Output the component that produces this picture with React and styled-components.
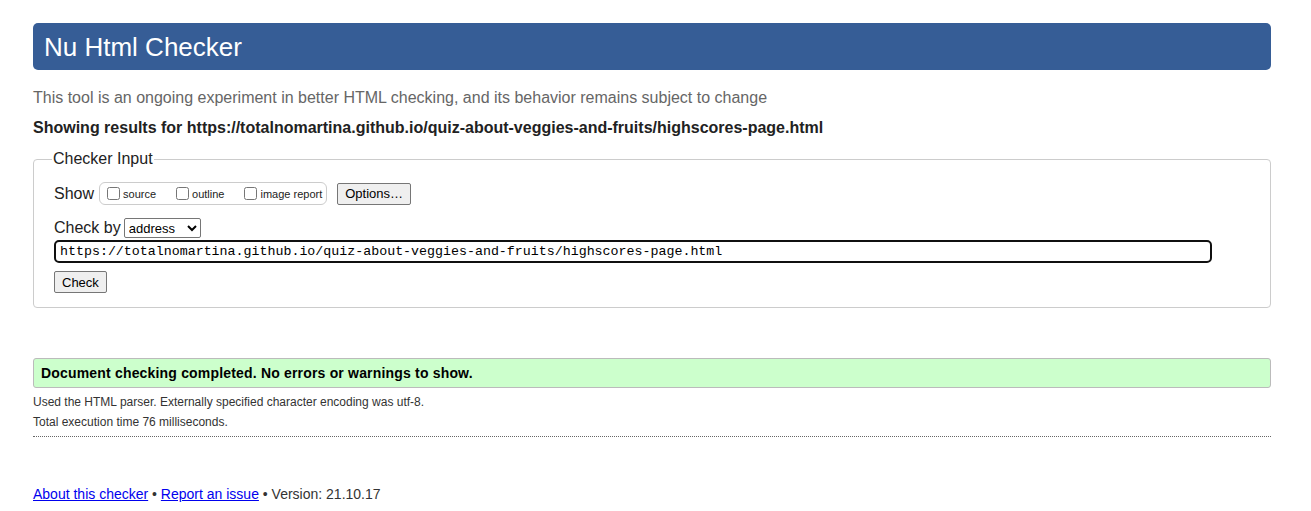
import React from "react";
import styled, { createGlobalStyle } from "styled-components";

const GlobalStyle = createGlobalStyle`
  body {
    margin: 0;
    background: #ffffff;
    font-family: "Liberation Sans", Arial, sans-serif;
    color: #222222;
  }
`;

const url = "https://totalnomartina.github.io/quiz-about-veggies-and-fruits/highscores-page.html";

function App() {
  return (
    <>
      <GlobalStyle />
      <Page>
        <Header>Nu Html Checker</Header>
        <Intro>This tool is an ongoing experiment in better HTML checking, and its behavior remains subject to change</Intro>
        <Results>Showing results for {url}</Results>
        <Fieldset>
          <Legend>Checker Input</Legend>
          <Row $after={13}>
            <Label>Show</Label>
            <ShowGroup>
              <Opt><input type="checkbox" />source</Opt>
              <Opt><input type="checkbox" />outline</Opt>
              <Opt><input type="checkbox" />image report</Opt>
            </ShowGroup>
            <Button>Options…</Button>
          </Row>
          <Row $after={2}>
            <Label>Check by</Label>
            <Select defaultValue="address">
              <option value="address">address</option>
            </Select>
          </Row>
          <UrlInput defaultValue={url} />
          <Row>
            <Button>Check</Button>
          </Row>
        </Fieldset>
        <Success>Document checking completed. No errors or warnings to show.</Success>
        <Details>
          <p>Used the HTML parser. Externally specified character encoding was utf-8.</p>
          <p>Total execution time 76 milliseconds.</p>
        </Details>
        <Footer>
          <a href="#about">About this checker</a> • <a href="#issue">Report an issue</a> • Version: 21.10.17
        </Footer>
      </Page>
    </>
  );
}

const Page = styled.div`
  padding: 23px 40px 0 33px;
  width: 1238px;
`;

const Header = styled.h1`
  margin: 0;
  height: 47px;
  box-sizing: border-box;
  padding: 9px 11px 0;
  background: #365d96;
  color: #ffffff;
  border-radius: 5px;
  font-size: 26px;
  font-weight: normal;
`;

const Intro = styled.p`
  margin: 19px 0 0;
  color: #666666;
  font-size: 16px;
`;

const Results = styled.p`
  margin: 12px 0 0;
  font-size: 16px;
  font-weight: bold;
`;

const Fieldset = styled.fieldset`
  margin: 13px 0 0;
  padding: 14px 20px 14px 20px;
  border: 1px solid #cccccc;
  border-radius: 4px;
  display: flex;
  flex-direction: column;
`;

const Legend = styled.legend`
  padding: 0 1px;
  margin-left: -2px;
  font-size: 16px;
`;

const Row = styled.div`
  display: flex;
  align-items: center;
  gap: 10px;
  margin-bottom: ${(p) => p.$after || 0}px;
`;

const Label = styled.span`
  font-size: 16px;
  margin-right: -7px;
`;

const ShowGroup = styled.span`
  display: inline-flex;
  align-items: center;
  gap: 18px;
  border: 1px solid #cccccc;
  border-radius: 6px;
  padding: 1px 4px 1px 5px;
  height: 19px;
  margin-left: 2px;
`;

const Opt = styled.label`
  display: inline-flex;
  align-items: flex-end;
  font-size: 11px;
  line-height: 12px;
  input {
    margin: 0 3px 0 2px;
    width: 13px;
    height: 13px;
  }
`;

const Button = styled.button`
  font-family: "Liberation Sans", Arial, sans-serif;
  font-size: 13px;
  padding: 2px 7px;
  background: #efefef;
  border: 1px solid #767676;
  border-radius: 2px;
  color: #000000;
  height: 22px;
`;

const Select = styled.select`
  font-family: "Liberation Sans", Arial, sans-serif;
  font-size: 13px;
  width: 77px;
  height: 20px;
  border: 1px solid #767676;
  border-radius: 2px;
  background: #ffffff;
  color: #000000;
`;

const UrlInput = styled.input`
  width: 1158px;
  box-sizing: border-box;
  height: 23px;
  margin-bottom: 8px;
  font-family: "Liberation Mono", "Courier New", monospace;
  font-size: 13.3px;
  border: 2px solid #101010;
  border-radius: 5px;
  padding: 0 4px;
  color: #000000;
  outline: none;
`;

const Success = styled.div`
  margin-top: 50px;
  height: 30px;
  box-sizing: border-box;
  padding: 6px 7px 0;
  background: #ccffcc;
  border: 1px solid #bbbbbb;
  border-radius: 3px;
  font-size: 14px;
  font-weight: bold;
  letter-spacing: 0.18px;
  color: #000000;
`;

const Details = styled.div`
  border-bottom: 1px dotted #666666;
  padding: 4px 0 4px;
  p {
    margin: 0;
    font-size: 12px;
    line-height: 20px;
    color: #333333;
  }
`;

const Footer = styled.p`
  margin: 49px 0 0;
  font-size: 14px;
  color: #333333;
  a {
    color: #0000ee;
  }
`;

export default App;
